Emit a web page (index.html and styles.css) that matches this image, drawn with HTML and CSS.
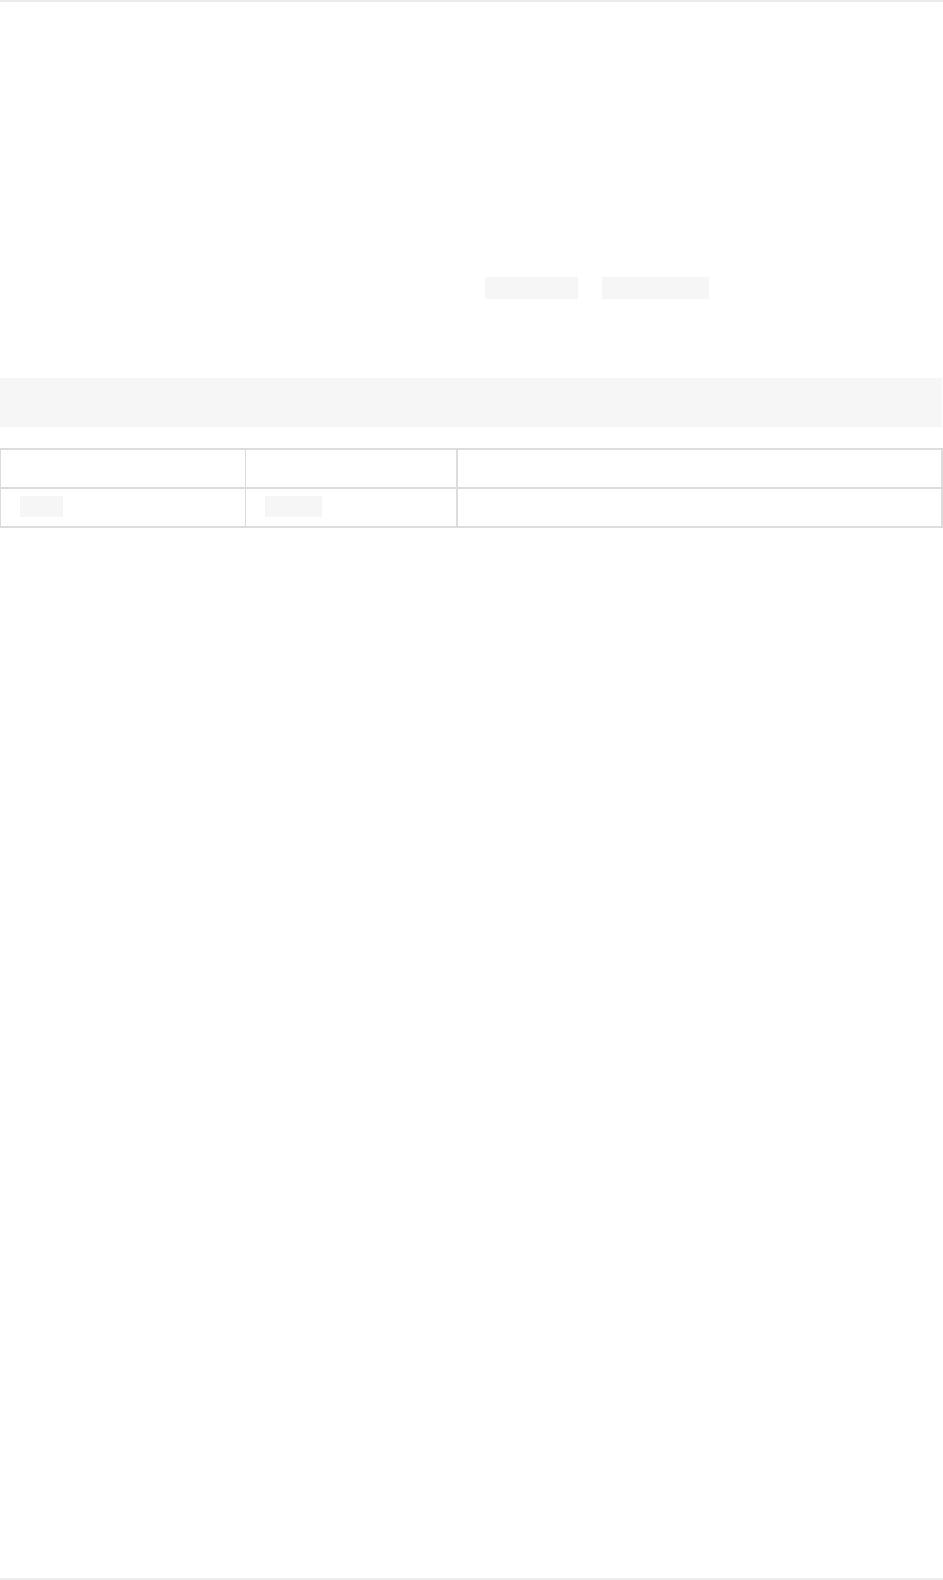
FILE: index.html
```html
<!DOCTYPE html>
<html lang="en">

<head>
    <meta charset="UTF-8">
    <meta name="viewport" content="width=device-width, initial-scale=1.0">
    <title>Document</title>
    <link rel="stylesheet" href="styles.css">
</head>

<body>
    <div class="page">
        <!-- Intro line with inline code -->
        <div class="chips">
            <code class="chip chip-a"></code>
            <code class="chip chip-b"></code>
        </div>

        <!-- Code block -->
        <pre class="banner"></pre>

        <!-- Table -->
        <div class="table">
            <div class="cell col-1 head"></div>
            <div class="cell col-2 head"></div>
            <div class="cell col-3 head"></div>
            <div class="cell col-1"><code class="chip chip-c"></code></div>
            <div class="cell col-2"><code class="chip chip-d"></code></div>
            <div class="cell col-3"></div>
        </div>
    </div>
</body>

</html>
```

FILE: styles.css
```css
/* Reset */
* {
    margin: 0;
    padding: 0;
    box-sizing: border-box;
}

body {
    font-family: "Liberation Sans", Arial, sans-serif;
    background-color: #fff;
    color: #fff;
}

.page {
    min-height: 1580px;
    border-top: 2px solid #ebebeb;
    border-bottom: 2px solid #ededed;
}

/* Inline code chips */
.chip {
    display: inline-block;
    height: 22px;
    background-color: #f6f6f6;
}

.chips {
    display: flex;
    gap: 24px;
    margin: 275px 0 0 485px;
}

.chip-a {
    width: 93px;
}

.chip-b {
    width: 107px;
}

/* Code block */
.banner {
    margin-top: 79px;
    width: 942px;
    height: 49px;
    background-color: #f6f6f6;
}

/* Table */
.table {
    margin-top: 21px;
    width: 943px;
    display: grid;
    grid-template-columns: 245px 212px 1fr;
    border: 2px solid #dcdcdc;
    border-left-width: 1px;
}

.cell {
    height: 37px;
    padding: 7px 0 0 19px;
}

.head {
    height: 39px;
    border-bottom: 2px solid #dcdcdc;
}

.col-1 {
    border-right: 1px solid #dcdcdc;
}

.col-2 {
    border-right: 2px solid #dcdcdc;
}

.chip-c {
    width: 43px;
    height: 21px;
}

.chip-d {
    width: 57px;
    height: 21px;
}
```
